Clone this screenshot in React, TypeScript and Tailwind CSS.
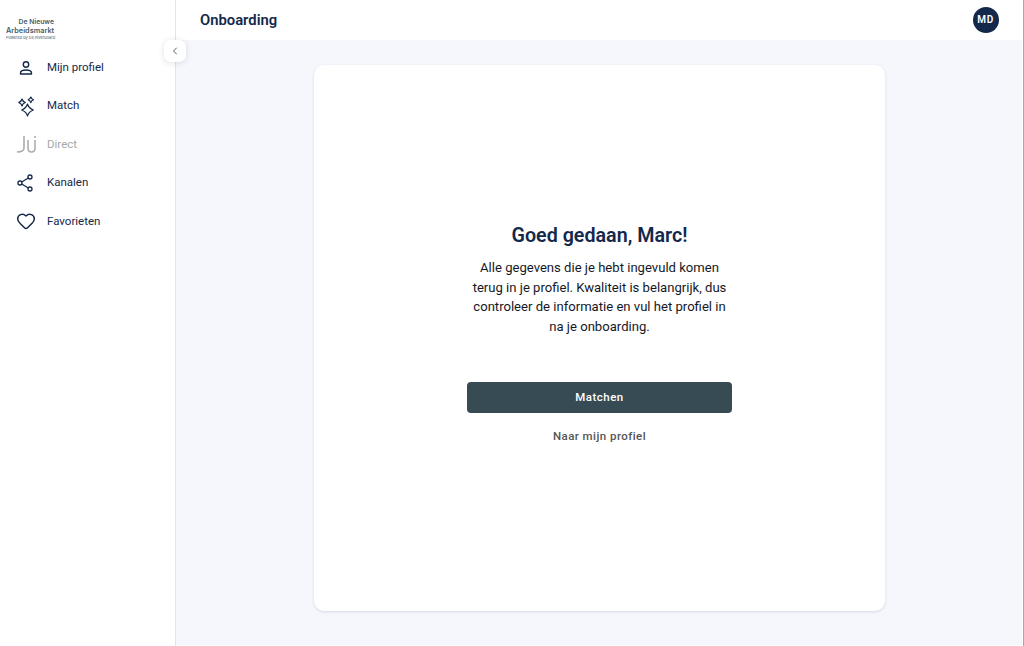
import { ChevronLeft, Heart } from 'lucide-react';
import type { ReactNode } from 'react';

const navy = 'text-[#14284b]';

function UserIcon() {
  return (
    <svg width="24" height="24" viewBox="0 0 24 24" fill="none" stroke="currentColor" strokeWidth="1.4">
      <circle cx="12" cy="8.500" r="2.700" />
      <path d="M6.500 18v-1c0-1.800 2.500-3 5.500-3s5.500 1.200 5.500 3v1z" strokeLinejoin="round" />
    </svg>
  );
}

function SparkIcon() {
  return (
    <svg width="24" height="24" viewBox="0 0 24 24" fill="none" stroke="currentColor" strokeWidth="1.200" strokeLinejoin="round">
      <path d="M13.500 10c.8 3 2.200 4.600 5.800 6-3.600 1.400-5 3-5.800 6-.8-3-2.200-4.600-5.800-6 3.600-1.400 5-3 5.800-6z" />
      <path d="M8 5c.4 1.700 1.300 2.700 3.300 3.500C9.300 9.300 8.400 10.300 8 12c-.4-1.700-1.300-2.700-3.300-3.500C6.700 7.700 7.600 6.700 8 5z" />
      <path d="M16.800 3c.4 1.300 1 2 2.700 2.800-1.700.8-2.300 1.500-2.700 2.800-.4-1.300-1-2-2.700-2.800 1.700-.8 2.300-1.500 2.700-2.800z" />
    </svg>
  );
}

function DirectIcon() {
  return (
    <svg width="24" height="24" viewBox="0 0 24 24" fill="none" stroke="#a8a8a8" strokeWidth="1.500">
      <path d="M10 4v12c0 2.800-2 4-7 4" />
      <path d="M14 8v8c0 2.800 1.200 4 3.500 4s3.500-1.200 3.500-4V8" />
      <path d="M21 4v2" />
    </svg>
  );
}

function ShareIcon() {
  return (
    <svg width="24" height="24" viewBox="0 0 24 24" fill="none" stroke="currentColor" strokeWidth="1.300">
      <circle cx="16" cy="6" r="2" />
      <circle cx="6" cy="12" r="2" />
      <circle cx="16" cy="18" r="2" />
      <path d="M14.300 7 7.700 11M7.700 13l6.600 4" />
    </svg>
  );
}

const navItems: { label: string; icon: ReactNode; disabled?: boolean }[] = [
  { label: 'Mijn profiel', icon: <UserIcon /> },
  { label: 'Match', icon: <SparkIcon /> },
  { label: 'Direct', icon: <DirectIcon />, disabled: true },
  { label: 'Kanalen', icon: <ShareIcon /> },
  { label: 'Favorieten', icon: <Heart size={20} strokeWidth={1.8} /> },
];

function Logo() {
  return (
    <div className="ml-[6px] mt-[17px] h-[31.500px] w-[48px] text-right font-['Inter',sans-serif] text-[#46606a]">
      <div className="whitespace-nowrap text-[6.800px] font-semibold leading-[9px]">De Nieuwe</div>
      <div className="whitespace-nowrap text-[7.300px] font-semibold leading-[9px]">Arbeidsmarkt</div>
      <div className="whitespace-nowrap text-[3.900px] leading-[6px]">Powered by De Riverboard</div>
    </div>
  );
}

export default function App() {
  return (
    <div className="flex h-[646px] w-[1024px] overflow-hidden bg-white font-['Roboto',sans-serif]">
      <aside className="relative z-10 w-[176px] shrink-0 border-r border-[#e3e4e8] bg-white">
        <Logo />
        <button className="absolute right-[-11px] top-[40px] flex h-[22px] w-[22px] items-center justify-center rounded-[7px] bg-white text-[#555e6b] shadow-[0_1px_6px_rgba(20,40,75,0.14)]">
          <ChevronLeft size={12} strokeWidth={2} />
        </button>
        <nav className="flex flex-col">
          {navItems.map((item) => (
            <div key={item.label} className={`flex h-[38.400px] items-center gap-[9px] pl-[14px] ${navy}`}>
              <span className="flex w-[24px] justify-center">{item.icon}</span>
              <span className={`text-[11.500px] ${item.disabled ? 'text-[#a8a8a8]' : ''}`}>{item.label}</span>
            </div>
          ))}
        </nav>
      </aside>

      <div className="flex min-w-0 flex-1 flex-col bg-[#f6f7fc]">
        <header className="flex h-[39.500px] shrink-0 items-center justify-between bg-white pl-[24px] pr-[23px]">
          <h1 className={`text-[14.800px] font-semibold ${navy}`}>Onboarding</h1>
          <div className="flex h-[26.500px] w-[26.500px] items-center justify-center rounded-full bg-[#14284b] text-[10px] font-semibold tracking-[0.9px] text-white">
            MD
          </div>
        </header>

        <main className="flex flex-1 justify-center pl-[1px] pt-[25px]">
          <section className="flex h-[546.500px] w-[571px] flex-col items-center rounded-[10px] bg-white pt-[158px] shadow-[0_1px_3px_rgba(20,40,75,0.14)]">
            <h2 className={`text-[19.700px] font-semibold leading-[26px] ${navy}`}>Goed gedaan, Marc!</h2>
            <p className="mt-[9.500px] w-[265px] text-center text-[13.100px] leading-[19.600px] text-[#15181f]">
              Alle gegevens die je hebt ingevuld komen terug in je profiel. Kwaliteit is belangrijk, dus controleer de informatie en vul het profiel in na je onboarding.
            </p>
            <button className="mt-[45.500px] h-[31px] w-[265px] rounded-[4px] bg-[#364b54] text-[11.500px] font-medium tracking-[0.5px] text-white">
              Matchen
            </button>
            <button className="mt-[15px] text-[11.500px] font-medium tracking-[0.45px] text-[#555555]">
              Naar mijn profiel
            </button>
          </section>
        </main>
        <div className="h-[1px] shrink-0 bg-white" />
      </div>

      <div className="w-[2px] shrink-0 border-r border-[#a8a8a8] bg-white" />
    </div>
  );
}
